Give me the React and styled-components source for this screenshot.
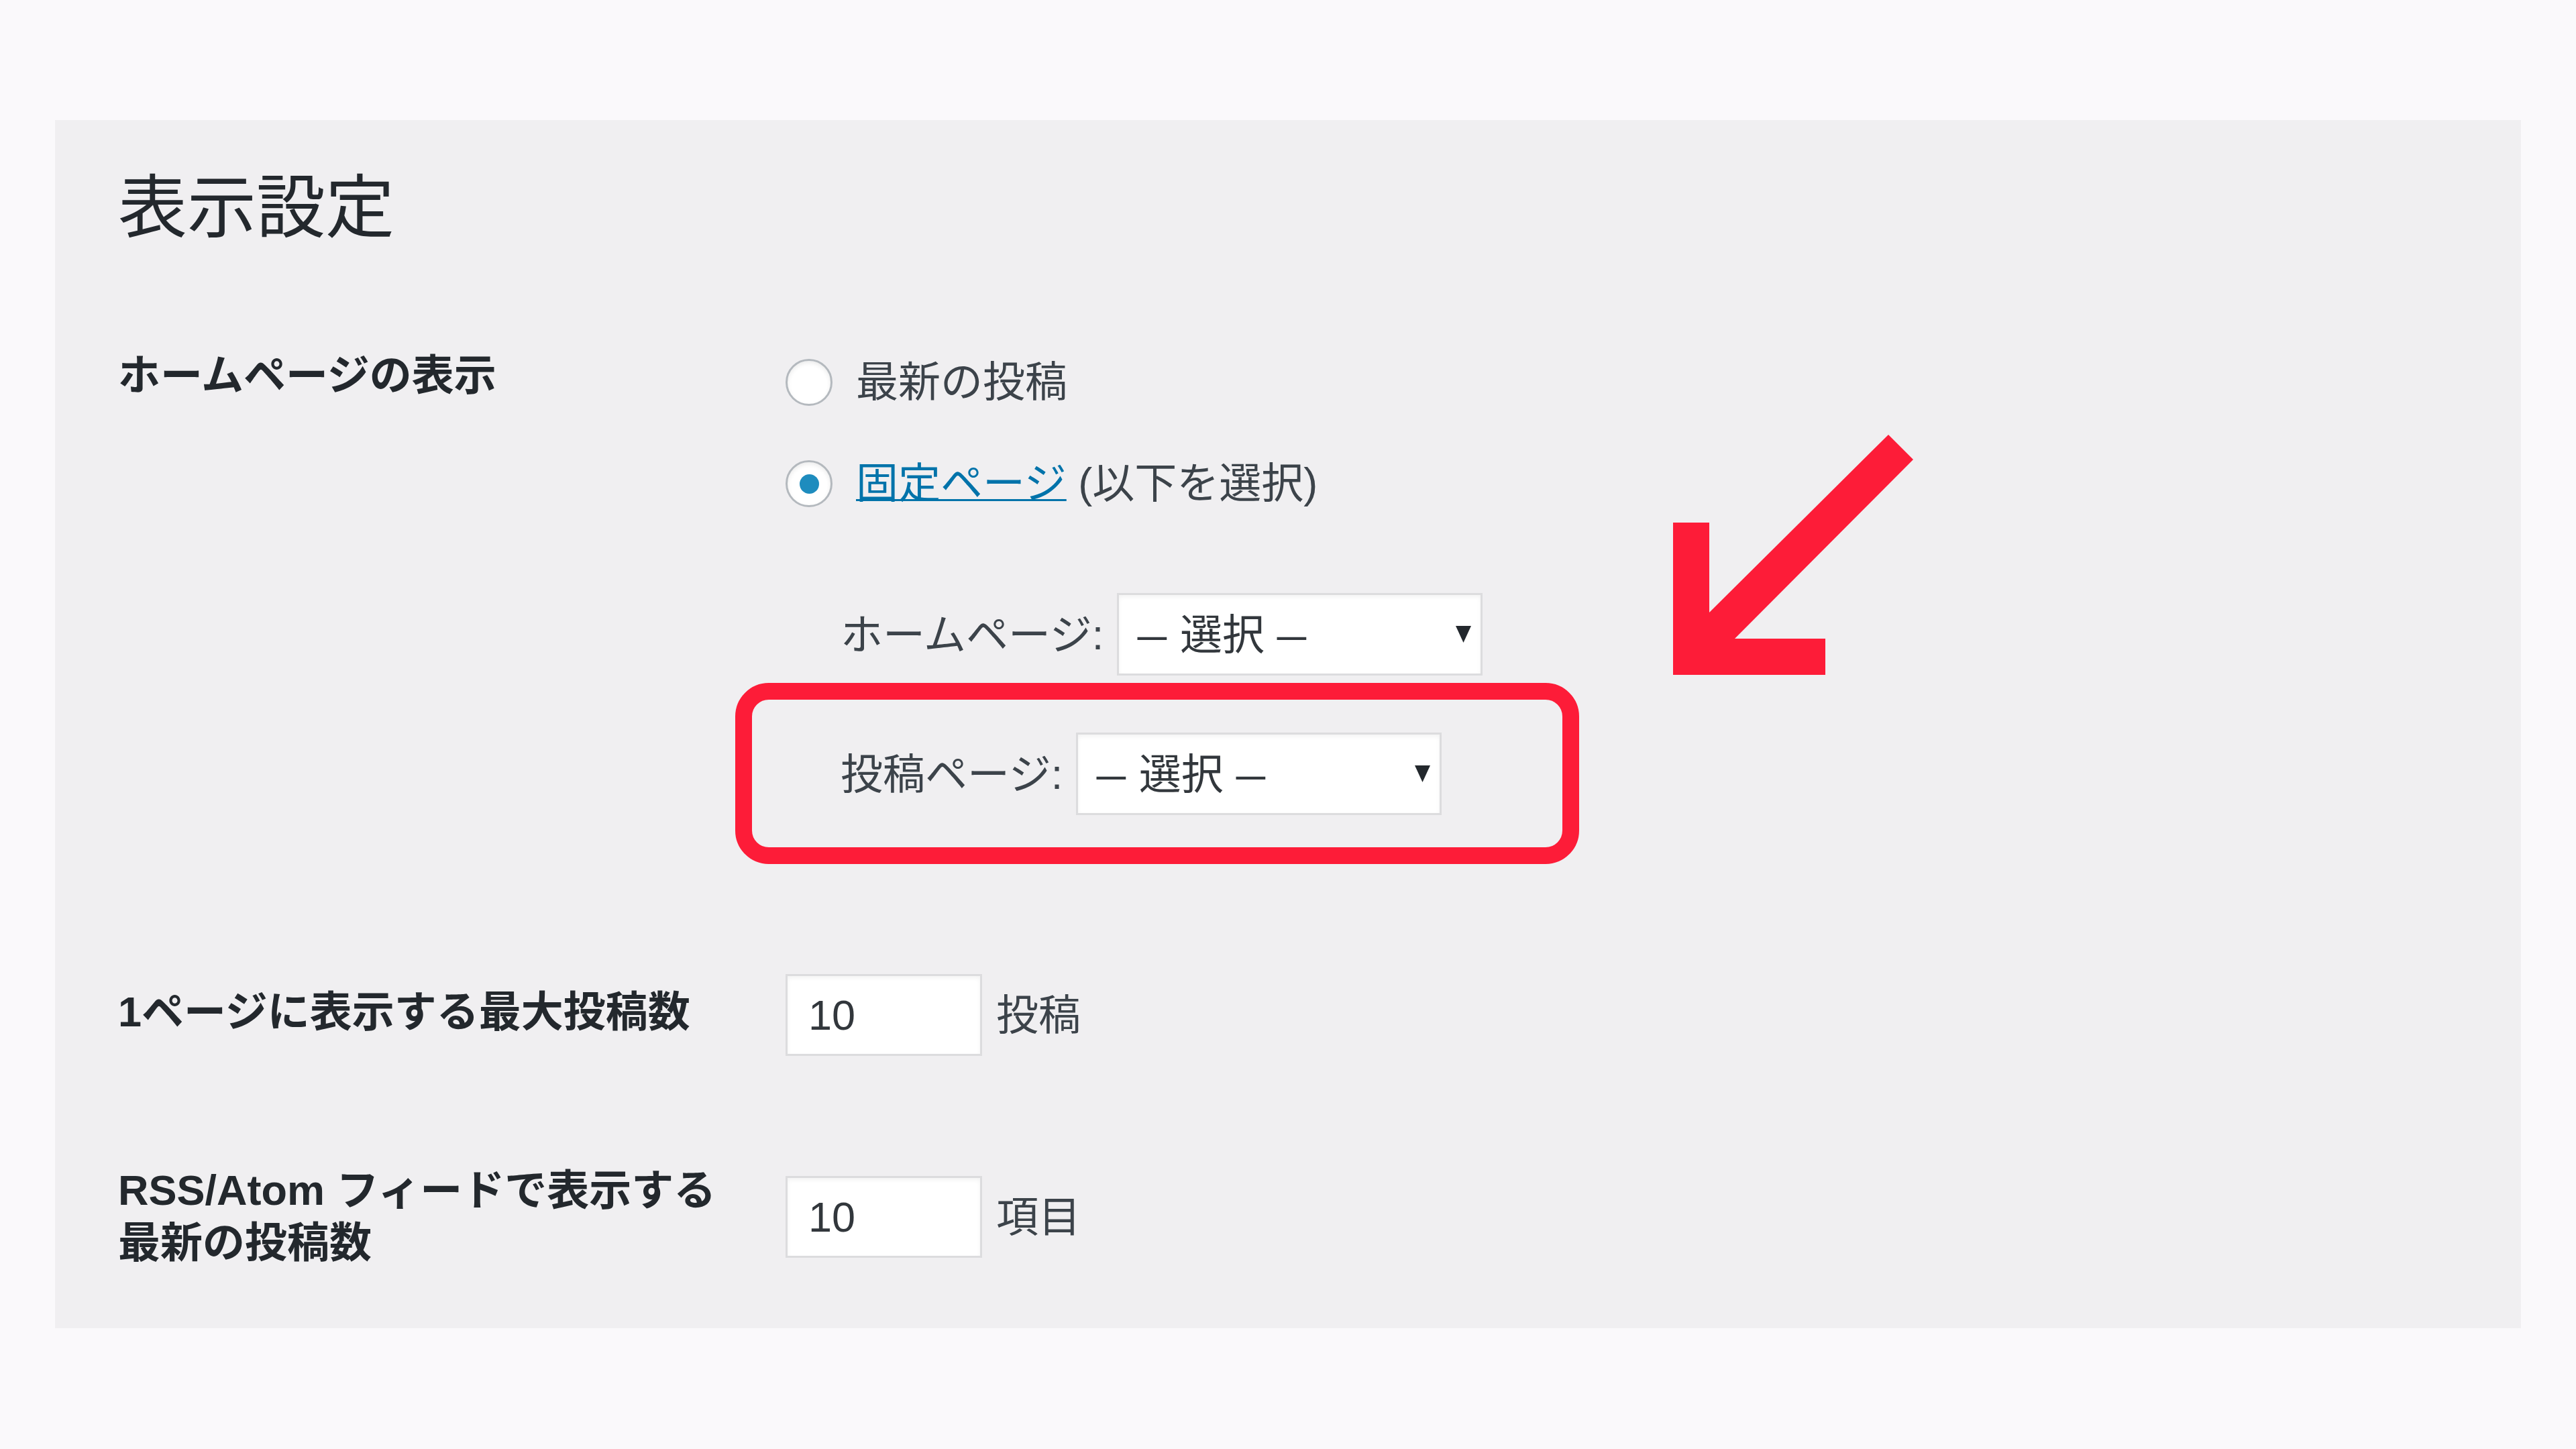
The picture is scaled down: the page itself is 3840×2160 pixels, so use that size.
import React from "react";
import styled, { createGlobalStyle } from "styled-components";

const GlobalStyle = createGlobalStyle`
  html, body {
    margin: 0;
    padding: 0;
    background: #faf9fb;
  }
  body {
    font-family: "Liberation Sans", "Noto Sans CJK JP", sans-serif;
  }
  *, *::before, *::after {
    box-sizing: border-box;
  }
`;

const Page = styled.div`
  width: 3840px;
  height: 2160px;
  padding: 179px 82px 0;
  background: #faf9fb;
  overflow: hidden;
`;

const Panel = styled.section`
  position: relative;
  background: #f0eff1;
  padding: 77px 0 89px 94px;
`;

const Title = styled.h1`
  margin: 0;
  font-size: 103px;
  line-height: 110px;
  font-weight: 400;
  color: #23282d;
`;

const FormTable = styled.div`
  display: flex;
  flex-direction: column;
`;

const Row = styled.div`
  display: grid;
  grid-template-columns: 995px 1fr;
  align-items: start;
  margin-top: ${(p) => p.$space}px;
`;

const RowLabel = styled.div`
  font-size: 63px;
  line-height: ${(p) => p.$lh || 80}px;
  font-weight: 700;
  color: #23282d;
  padding-top: ${(p) => p.$pt || 0}px;
`;

const Field = styled.div`
  padding-top: ${(p) => p.$pt || 0}px;
  font-size: 63px;
  line-height: 80px;
  color: #3c434a;
`;

const RadioList = styled.div`
  display: flex;
  flex-direction: column;
  gap: 71px;
`;

const Option = styled.label`
  display: flex;
  align-items: flex-start;
  gap: 35px;
  font-size: 63px;
  line-height: 80px;
  color: #3c434a;
`;

const Radio = styled.span`
  position: relative;
  flex: none;
  width: 70px;
  height: 70px;
  margin-top: 6px;
  border-radius: 50%;
  border: 3px solid #b4b9be;
  background: #fff;
  box-shadow: inset 0 3px 6px rgba(0, 0, 0, 0.08);

  &::before {
    content: "";
    display: ${(p) => (p.$checked ? "block" : "none")};
    position: absolute;
    left: 50%;
    top: 50%;
    width: 29px;
    height: 29px;
    margin: -14.5px 0 0 -14.5px;
    border-radius: 50%;
    background: #1e8cbe;
  }
`;

const Link = styled.a`
  color: #0073aa;
  text-decoration: underline;
  text-decoration-thickness: 3px;
`;

const SubList = styled.div`
  display: flex;
  flex-direction: column;
  gap: 85px;
  margin-top: 124px;
  padding-left: 82px;
`;

const SubRow = styled.div`
  display: flex;
  align-items: center;
  gap: ${(p) => p.$gap || 22}px;
`;

const SubLabel = styled.span`
  font-size: 63px;
  line-height: 80px;
  color: #3c434a;
`;

const SelectBox = styled.div`
  width: 545px;
  height: 123px;
  display: flex;
  align-items: center;
  justify-content: space-between;
  padding: 0 14px 0 32px;
  background: #fff;
  border: 3px solid #dcdcde;
  box-shadow: inset 0 3px 6px rgba(0, 0, 0, 0.05);
  font-size: 63px;
  line-height: 80px;
  color: #32373c;
`;

const SelectValue = styled.span`
  word-spacing: 6px;
`;

const Dash = styled.span`
  display: inline-block;
  transform: scaleX(1.25);
`;

const Caret = styled.svg`
  width: 23px;
  height: 25px;
  flex: none;
`;

const NumberRow = styled.div`
  display: flex;
  align-items: center;
  gap: 21px;
`;

const NumberInput = styled.input`
  width: 293px;
  height: 122px;
  padding: 0 0 0 31px;
  margin: 0;
  border: 3px solid #dcdcde;
  background: #fff;
  box-shadow: inset 0 3px 6px rgba(0, 0, 0, 0.05);
  font-family: "Liberation Sans", "Noto Sans CJK JP", sans-serif;
  font-size: 63px;
  color: #32373c;
  outline: none;
`;

const Unit = styled.span`
  font-size: 63px;
  line-height: 80px;
  color: #3c434a;
`;

const Highlight = styled.div`
  position: absolute;
  left: 1014px;
  top: 839px;
  width: 1258px;
  height: 270px;
  border: 25px solid #fd1c38;
  border-radius: 50px;
  pointer-events: none;
`;

const ArrowMark = styled.svg`
  position: absolute;
  left: 2412px;
  top: 469px;
  width: 358px;
  height: 358px;
  pointer-events: none;
`;

const PageSelect = ({ label, gap }) => (
  <SubRow $gap={gap}>
    <SubLabel>{label}</SubLabel>
    <SelectBox role="combobox">
      <SelectValue>
        <Dash>–</Dash> 選択 <Dash>–</Dash>
      </SelectValue>
      <Caret viewBox="0 0 23 25">
        <polygon points="0,0 23,0 11.5,25" fill="#23282d" />
      </Caret>
    </SelectBox>
  </SubRow>
);

export default function App() {
  return (
    <>
      <GlobalStyle />
      <Page>
        <Panel>
          <Title>表示設定</Title>
          <FormTable>
            <Row $space={153}>
              <RowLabel>ホームページの表示</RowLabel>
              <Field $pt={10}>
                <RadioList>
                  <Option>
                    <Radio />
                    <span>最新の投稿</span>
                  </Option>
                  <Option>
                    <Radio $checked />
                    <span>
                      <Link href="#">固定ページ</Link> (以下を選択)
                    </span>
                  </Option>
                </RadioList>
                <SubList>
                  <PageSelect label="ホームページ:" gap={20} />
                  <PageSelect label="投稿ページ:" gap={20} />
                </SubList>
              </Field>
            </Row>
            <Row $space={237}>
              <RowLabel $pt={16}>1ページに表示する最大投稿数</RowLabel>
              <Field>
                <NumberRow>
                  <NumberInput type="text" defaultValue="10" readOnly />
                  <Unit>投稿</Unit>
                </NumberRow>
              </Field>
            </Row>
            <Row $space={161}>
              <RowLabel $lh={78}>
                RSS/Atom フィードで表示する
                <br />
                最新の投稿数
              </RowLabel>
              <Field $pt={18}>
                <NumberRow>
                  <NumberInput type="text" defaultValue="10" readOnly />
                  <Unit>項目</Unit>
                </NumberRow>
              </Field>
            </Row>
          </FormTable>
          <Highlight />
          <ArrowMark viewBox="0 0 358 358">
            <polygon
              points="0,131 54,131 54,265 321,0 358,37 92,304 227,304 227,358 0,358"
              fill="#fd1c38"
            />
          </ArrowMark>
        </Panel>
      </Page>
    </>
  );
}
